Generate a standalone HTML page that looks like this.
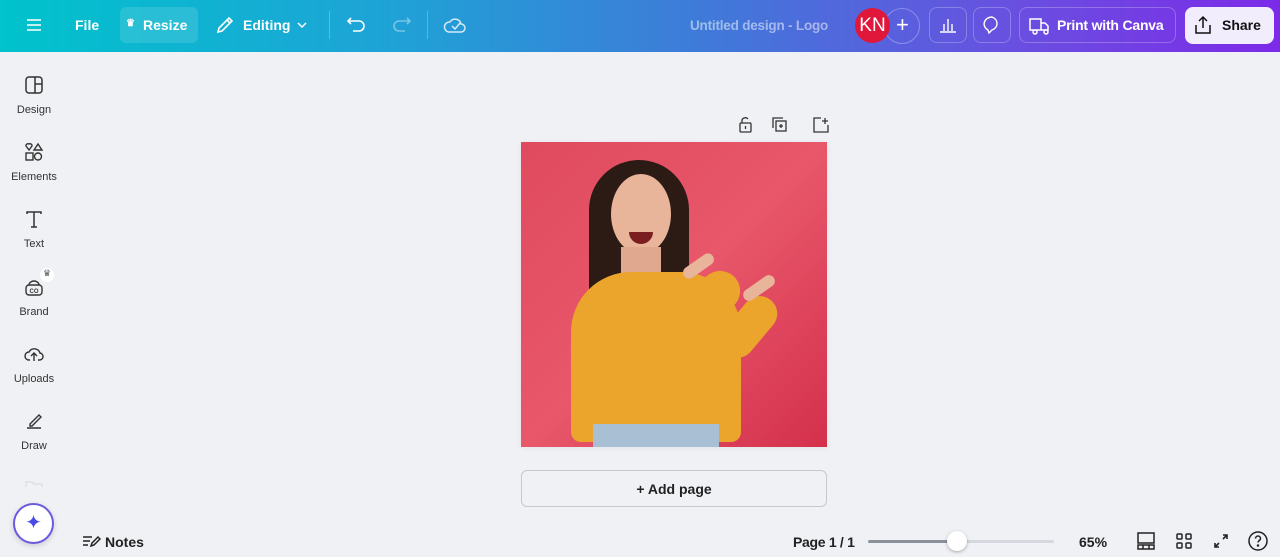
<!DOCTYPE html>
<html><head><meta charset="utf-8"><style>
*{margin:0;padding:0;box-sizing:border-box}
body{width:1280px;height:557px;overflow:hidden;background:#f0f1f5;font-family:"Liberation Sans",sans-serif;position:relative}
.top{position:absolute;left:0;top:0;width:1280px;height:52px;background:linear-gradient(90deg,#00c3cc 0%,#1ea3d6 30%,#3f7ad9 55%,#6a4ee0 80%,#7d2ae8 100%);color:#fff}
.t{position:absolute;font-weight:bold;font-size:14px;color:#fff}
.box{position:absolute;border:1px solid rgba(255,255,255,.25);border-radius:8px;height:36px;top:7px}
.side{position:absolute;left:0;width:68px;text-align:center;font-size:11px;color:#333}
.side svg{display:block;margin:0 auto 9px}
.bot{position:absolute;font-size:14px;font-weight:bold;color:#222}
</style></head><body>
<div class="top">
<svg style="position:absolute;left:26px;top:17px" width="16" height="16" stroke="#fff" stroke-width="1.6"><path d="M1 3h14M1 8h14M1 13h14"/></svg>
<div class="t" style="left:75px;top:17px">File</div>
<div style="position:absolute;left:120px;top:7px;width:78px;height:36px;border-radius:6px;background:rgba(255,255,255,.12)"></div>
<div class="t" style="left:126px;top:18px;font-size:10px">♛</div>
<div class="t" style="left:143px;top:17px">Resize</div>
<svg style="position:absolute;left:215px;top:15px" width="20" height="20" fill="none" stroke="#fff" stroke-width="1.6"><path d="M3 17l1-4L14 3l3 3L7 16z M12 5l3 3"/></svg>
<div class="t" style="left:243px;top:17px">Editing</div>
<svg style="position:absolute;left:296px;top:20px" width="12" height="10" fill="none" stroke="#fff" stroke-width="1.5"><path d="M2 3l4 4 4-4"/></svg>
<div style="position:absolute;left:329px;top:11px;width:1px;height:28px;background:rgba(255,255,255,.25)"></div>
<svg style="position:absolute;left:346px;top:15px" width="22" height="20" fill="none" stroke="#fff" stroke-width="1.6"><path d="M5 3L2 6l3 3M2 6h11a5 5 0 010 10H7"/></svg>
<svg style="position:absolute;left:390px;top:15px" width="22" height="20" fill="none" stroke="rgba(255,255,255,.4)" stroke-width="1.6"><path d="M17 3l3 3-3 3M20 6H9a5 5 0 000 10h6"/></svg>
<div style="position:absolute;left:427px;top:11px;width:1px;height:28px;background:rgba(255,255,255,.25)"></div>
<svg style="position:absolute;left:443px;top:14px" width="24" height="22" fill="none" stroke="rgba(255,255,255,.8)" stroke-width="1.5"><path d="M6 18h12a4 4 0 000-8 6 6 0 00-11-2 5 5 0 00-1 10zM9 12l3 3 5-6"/></svg>
<div style="position:absolute;left:690px;top:18px;font-size:13.5px;font-weight:bold;color:rgba(255,255,255,.5);letter-spacing:-.2px">Untitled design - Logo</div>
<div style="position:absolute;left:884px;top:8px;width:36px;height:36px;border-radius:50%;border:1px solid rgba(255,255,255,.3)"></div>
<div style="position:absolute;left:896px;top:12px;font-size:22px;color:#fff">+</div>
<div style="position:absolute;left:855px;top:8px;width:35px;height:35px;border-radius:50%;background:#e0163a;color:#fff;font-size:19px;text-align:center;line-height:35px">KN</div>
<div class="box" style="left:929px;width:38px"></div>
<svg style="position:absolute;left:938px;top:15px" width="20" height="20" fill="none" stroke="#fff" stroke-width="1.4"><path d="M2 17h16M6 16V9M10 16V4M14 16V9"/></svg>
<div class="box" style="left:973px;width:38px"></div>
<svg style="position:absolute;left:982px;top:15px" width="20" height="20" fill="none" stroke="#fff" stroke-width="1.4"><path d="M10 2a8 7 0 00-4 13l1 3 3-3a8 7 0 000-13z"/></svg>
<div class="box" style="left:1019px;width:157px"></div>
<svg style="position:absolute;left:1028px;top:15px" width="22" height="20" fill="none" stroke="#fff" stroke-width="1.5"><path d="M2 4h11v11H2zM13 8h4l3 3v4h-7M5 17a2 2 0 100-.1M16 17a2 2 0 100-.1"/></svg>
<div class="t" style="left:1057px;top:17px;letter-spacing:-.2px">Print with Canva</div>
<div style="position:absolute;left:1185px;top:7px;width:89px;height:37px;border-radius:8px;background:#f1edfd"></div>
<svg style="position:absolute;left:1192px;top:14px" width="22" height="22" fill="none" stroke="#111" stroke-width="1.5"><path d="M11 14V3M7 7l4-4 4 4M4 11v8h14v-8"/></svg>
<div class="t" style="left:1222px;top:17px;color:#111">Share</div>
</div>

<div class="side" style="top:75px"><svg width="20" height="20" fill="none" stroke="#333" stroke-width="1.5"><rect x="2" y="2" width="16" height="16" rx="3"/><path d="M11 2v16M11 9h7"/></svg>Design</div>
<div class="side" style="top:142px"><svg width="20" height="20" fill="none" stroke="#333" stroke-width="1.4"><path d="M5 2a2 2 0 013 2l-3 4-3-4a2 2 0 013-2zM14 2l4 6h-8z"/><rect x="2" y="11" width="7" height="7"/><circle cx="14" cy="14.5" r="3.5"/></svg>Elements</div>
<div class="side" style="top:209px"><svg width="20" height="20" fill="none" stroke="#333" stroke-width="1.5"><path d="M3 5V3h14v2M10 3v15M7 18h6"/></svg>Text</div>
<div class="side" style="top:277px"><svg width="20" height="20" fill="none" stroke="#333" stroke-width="1.4"><rect x="2" y="8" width="16" height="10" rx="3"/><path d="M5 8a5 4 0 0110 0M7 5a4 3 0 016 0"/><text x="10" y="16" font-size="6" text-anchor="middle" fill="#333" stroke="none" font-weight="bold">CO</text></svg>Brand</div>
<div style="position:absolute;left:40px;top:268px;width:14px;height:14px;border-radius:50%;background:#fff;font-size:9px;text-align:center;color:#555">♛</div>
<div class="side" style="top:344px"><svg width="22" height="20" fill="none" stroke="#333" stroke-width="1.4"><path d="M7 16H6a4 4 0 010-8 6 6 0 0111 1 3.5 3.5 0 01-1 7h-1M11 17v-7M8 12l3-3 3 3"/></svg>Uploads</div>
<div class="side" style="top:411px"><svg width="20" height="20" fill="none" stroke="#333" stroke-width="1.4"><path d="M6 13l9-9 2 2-9 9H6zM3 17h14"/></svg>Draw</div>
<svg style="position:absolute;left:24px;top:478px" width="20" height="10" fill="none" stroke="#ddd" stroke-width="1.3"><path d="M2 9V4h6l2 2h8v3"/></svg>
<div style="position:absolute;left:13px;top:503px;width:41px;height:41px;border-radius:50%;background:#fff;border:2px solid #6a5ae0;box-shadow:0 2px 6px rgba(0,0,0,.15);text-align:center;line-height:37px;color:#4a4ae8;font-size:20px">✦</div>

<svg style="position:absolute;left:736px;top:116px" width="100" height="18" fill="none" stroke="#333" stroke-width="1.3"><rect x="4" y="7" width="11" height="9" rx="1"/><path d="M6 7V4a3.5 3.5 0 016-1M9.5 10v3"/><rect x="40" y="5" width="10" height="10"/><path d="M37 12V2h10M45 8v4M43 10h4"/><path d="M85 2h-7v14h14V9M89 2v6M86 5h6"/></svg>

<div style="position:absolute;left:521px;top:142px;width:306px;height:305px;background:linear-gradient(135deg,#e04a5e,#e8576a 50%,#d4304c);overflow:hidden;box-shadow:0 1px 6px rgba(0,0,0,.06)">
<div style="position:absolute;left:68px;top:18px;width:100px;height:160px;border-radius:50px 50px 20px 20px;background:#2c1a14"></div>
<div style="position:absolute;left:90px;top:32px;width:60px;height:80px;border-radius:50%;background:#e8b49a"></div>
<div style="position:absolute;left:108px;top:90px;width:24px;height:12px;border-radius:0 0 12px 12px;background:#7a1e20"></div>
<div style="position:absolute;left:100px;top:105px;width:40px;height:40px;background:#e0a88e"></div>
<div style="position:absolute;left:50px;top:130px;width:170px;height:170px;border-radius:60px 60px 10px 10px;background:#eba52c"></div>
<div style="position:absolute;left:160px;top:120px;width:40px;height:90px;border-radius:20px;background:#eba52c;transform:rotate(50deg)"></div>
<div style="position:absolute;left:210px;top:150px;width:35px;height:70px;border-radius:18px;background:#eba52c;transform:rotate(40deg)"></div>
<div style="position:absolute;left:160px;top:118px;width:35px;height:12px;border-radius:6px;background:#e8b49a;transform:rotate(-35deg)"></div>
<div style="position:absolute;left:220px;top:140px;width:36px;height:12px;border-radius:6px;background:#e8b49a;transform:rotate(-35deg)"></div>
<div style="position:absolute;left:72px;top:282px;width:126px;height:30px;background:#a9c0d4"></div>
</div>

<div style="position:absolute;left:521px;top:470px;width:306px;height:37px;border:1px solid #c5c8d0;border-radius:6px;background:#f0f1f5;text-align:center;line-height:36px;font-size:14px;font-weight:bold;color:#222">+ Add page</div>

<svg style="position:absolute;left:81px;top:533px" width="20" height="16" fill="none" stroke="#222" stroke-width="1.5"><path d="M2 4h9M2 8h7M2 12h5M10 13l1-3 6-6 2 2-6 6z"/></svg>
<div class="bot" style="left:105px;top:534px">Notes</div>
<div class="bot" style="left:793px;top:534px;letter-spacing:-.3px">Page 1 / 1</div>
<div style="position:absolute;left:868px;top:540px;width:88px;height:3px;background:#8c929c;border-radius:2px"></div>
<div style="position:absolute;left:956px;top:540px;width:98px;height:3px;background:#d5d8de;border-radius:2px"></div>
<div style="position:absolute;left:947px;top:531px;width:20px;height:20px;border-radius:50%;background:#fff;box-shadow:0 1px 3px rgba(0,0,0,.3)"></div>
<div class="bot" style="left:1079px;top:534px">65%</div>
<svg style="position:absolute;left:1136px;top:531px" width="20" height="20" fill="none" stroke="#222" stroke-width="1.5"><rect x="2" y="2" width="16" height="10"/><path d="M2 14h16v4H2zM7 14v4M13 14v4"/></svg>
<svg style="position:absolute;left:1175px;top:532px" width="18" height="18" fill="none" stroke="#222" stroke-width="1.5"><rect x="2" y="2" width="5" height="5" rx="1"/><rect x="11" y="2" width="5" height="5" rx="1"/><rect x="2" y="11" width="5" height="5" rx="1"/><rect x="11" y="11" width="5" height="5" rx="1"/></svg>
<svg style="position:absolute;left:1212px;top:532px" width="18" height="18" fill="none" stroke="#222" stroke-width="1.6"><path d="M11 3h4v4M15 3l-4 4M3 11v4h4M3 15l4-4"/></svg>
<svg style="position:absolute;left:1247px;top:530px" width="22" height="22" fill="none" stroke="#222" stroke-width="1.5"><circle cx="11" cy="11" r="9"/><path d="M8.5 8.5a2.5 2.5 0 115 0c0 2-2.5 2-2.5 4"/><circle cx="11" cy="15.5" r=".5" fill="#222"/></svg>
</body></html>
